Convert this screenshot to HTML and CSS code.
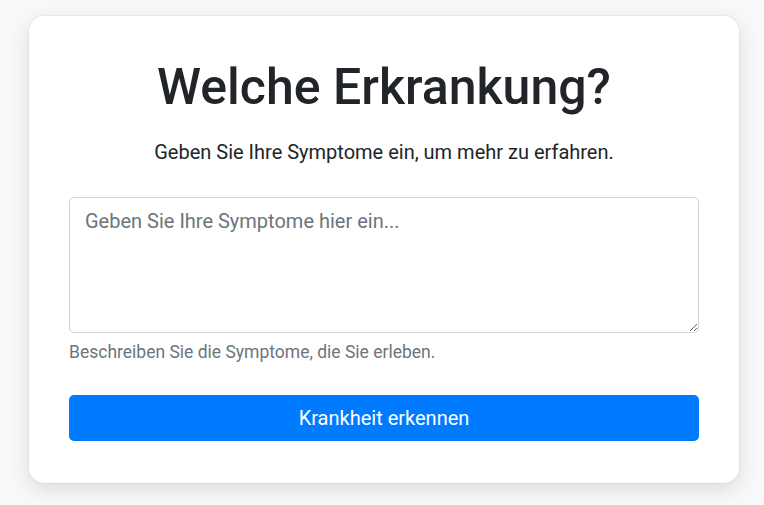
FILE: index.html
```html
<!DOCTYPE html>
<html lang="de">
<head>
<meta charset="utf-8">
<title>Welche Erkrankung?</title>
<link rel="stylesheet" href="styles.css">
</head>
<body>
<main class="card">
  <h1 class="title">Welche Erkrankung?</h1>
  <p class="lead">Geben Sie Ihre Symptome ein, um mehr zu erfahren.</p>
  <form class="form">
    <textarea class="input" placeholder="Geben Sie Ihre Symptome hier ein..."></textarea>
    <small class="help">Beschreiben Sie die Symptome, die Sie erleben.</small>
    <button type="button" class="btn">Krankheit erkennen</button>
  </form>
</main>
</body>
</html>
```

FILE: styles.css
```css
* { box-sizing: border-box; }
html, body { margin: 0; }
html { background: #f8f9fa; }
body {
  background: #f8f9fa;
  font-family: Roboto, "Liberation Sans", sans-serif;
  color: #212529;
  padding: 16px 25px 20px 29px;
}
.card {
  width: 710px;
  background: #fff;
  border-radius: 15px;
  box-shadow: 0 0 0 1px rgba(0,0,0,0.04), 0 6px 22px rgba(0,0,0,0.13);
  padding: 41px 40px 42px;
}
.title {
  margin: 0;
  text-align: center;
  font-size: 50px;
  font-weight: 500;
  line-height: 1.2;
  color: #212529;
}
.lead {
  margin: 20px 0 0;
  text-align: center;
  font-size: 20px;
  line-height: 1.5;
}
.form {
  margin-top: 30px;
  display: flex;
  flex-direction: column;
}
.input {
  display: block;
  width: 100%;
  height: 136px;
  border: 1px solid #ced4da;
  border-radius: 5px;
  padding: 8px 15px;
  font-family: inherit;
  font-size: 20px;
  line-height: 1.5;
  color: #495057;
  resize: vertical;
}
.input::placeholder { color: #6c757d; opacity: 1; }
.help {
  margin-top: 6px;
  font-size: 17.5px;
  line-height: 1.5;
  color: #6c757d;
}
.btn {
  margin-top: 30px;
  height: 46px;
  border: 0;
  border-radius: 5px;
  background: #007bff;
  color: #fff;
  font-family: inherit;
  font-size: 20px;
  line-height: 1.5;
}
```
